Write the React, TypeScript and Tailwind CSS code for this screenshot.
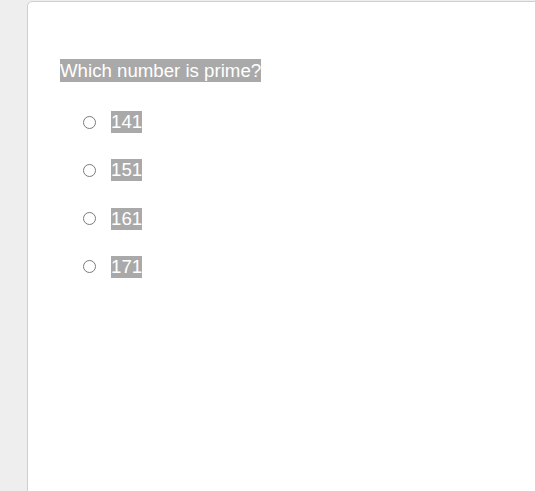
const options = ['141', '151', '161', '171'];

function App() {
    return (
        <div className="h-[491px] w-[535px] overflow-hidden bg-[#eeeeee] pl-[27px] pt-[1px] font-['Liberation_Sans',Arial,sans-serif]">
            <div className="h-[520px] w-[540px] rounded-tl-[5px] border border-[#cfcfcf] bg-white pl-[32px] pt-[57px]">
                <div className="text-[18.67px] leading-[24px] text-white">
                    <span className="bg-[#a9a9a9] py-[1px]">Which number is prime?</span>
                </div>
                <div className="mt-[28px] flex flex-col gap-[26.3px] pl-[23px]">
                    {options.map((o) => (
                        <div key={o} className="flex h-[22px] items-center">
                            <span className="h-[13px] w-[13px] rounded-full border border-[#7a7a7a] bg-white" />
                            <span className="ml-[15px] bg-[#a9a9a9] text-[18.67px] leading-[22px] text-white">
                                {o}
                            </span>
                        </div>
                    ))}
                </div>
            </div>
        </div>
    );
}

export default App;
